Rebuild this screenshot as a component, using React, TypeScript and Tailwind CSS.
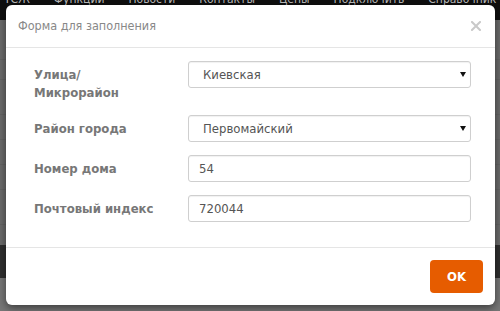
import { useState } from 'react';

const FONT = "font-['DejaVu_Sans_Condensed','DejaVu_Sans',Tahoma,sans-serif]";

const NAV = ['ТСЖ', 'Функции', 'Новости', 'Контакты', 'Цены', 'Подключить', 'Справочник'];

function Caret() {
  return (
    <svg
      viewBox="0 0 6 5"
      className="pointer-events-none absolute right-[5px] top-[11px] h-[5px] w-[6px]"
      aria-hidden
    >
      <path d="M0 0 H6 L3 5 Z" fill="#111" />
    </svg>
  );
}

function SelectField({ value, options }: { value: string; options: string[] }) {
  const [v, setV] = useState(value);
  return (
    <div className="relative w-[283px]">
      <select
        value={v}
        onChange={(e) => setV(e.target.value)}
        className="h-[27px] w-full appearance-none rounded-[3px] border border-[#cfcfcf] bg-white pl-[14px] text-[13px] text-[#555] shadow-[inset_0_1px_1px_rgba(0,0,0,0.06)] outline-none"
      >
        {options.map((o) => (
          <option key={o}>{o}</option>
        ))}
      </select>
      <Caret />
    </div>
  );
}

function TextField({ value }: { value: string }) {
  const [v, setV] = useState(value);
  return (
    <input
      value={v}
      onChange={(e) => setV(e.target.value)}
      className="h-[27px] w-[283px] rounded-[3px] border border-[#cfcfcf] bg-white px-[10px] text-[13px] text-[#555] shadow-[inset_0_1px_1px_rgba(0,0,0,0.06)] outline-none"
    />
  );
}

function Row({ label, children }: { label: React.ReactNode; children: React.ReactNode }) {
  return (
    <div className="flex items-start">
      <label className="w-[154px] pt-[5px] text-[13px] font-bold leading-[18px] text-[#777]">
        {label}
      </label>
      {children}
    </div>
  );
}

export default function App() {
  return (
    <div className={`relative h-[311px] w-[500px] overflow-hidden bg-[#6b6b6b] ${FONT}`}>
      {/* page behind the dialog */}
      <div className="flex h-[20px] items-start gap-[24px] overflow-hidden bg-[#0f0f0f] pl-[4px]">
        {NAV.map((n) => (
          <span key={n} className="-mt-[8px] shrink-0 text-[12px] leading-[14px] text-[#bdbdbd]">
            {n}
          </span>
        ))}
      </div>
      <div className="flex h-[225px] flex-col">
        <div className="h-[40px] border-b border-[#646464]" />
        <div className="h-[20px] border-b border-[#646464]" />
        <div className="h-[35px] border-b border-[#646464]" />
        <div className="h-[25px] border-b border-[#646464]" />
        <div className="h-[25px] border-b border-[#646464]" />
        <div className="h-[25px] border-b border-[#646464]" />
        <div className="h-[35px] border-b border-[#646464]" />
      </div>
      <div className="h-[33px] bg-[#2f2f2f]" />
      <div className="h-[33px] bg-[#777]" />

      {/* dialog */}
      <div className="absolute left-[6px] top-[5px] flex h-[300px] w-[489px] flex-col rounded-[6px] bg-white shadow-[0_3px_9px_rgba(0,0,0,0.5)]">
        <div className="flex h-[43px] items-center justify-between border-b border-[#e5e5e5] px-3">
          <h4 className="text-[12.5px] font-normal text-[#888]">Форма для заполнения</h4>
          <button type="button" aria-label="Закрыть" className="mr-[2px] p-0">
            <svg viewBox="0 0 10 10" className="h-[10px] w-[10px]" aria-hidden>
              <path d="M1 1 L9 9 M9 1 L1 9" stroke="#c9c9c9" strokeWidth="2" strokeLinecap="square" />
            </svg>
          </button>
        </div>

        <div className="flex flex-1 flex-col gap-[13px] pl-[28px] pt-[13px]">
          <Row
            label={
              <>
                Улица/
                <br />
                Микрорайон
              </>
            }
          >
            <SelectField value="Киевская" options={['Киевская', 'Московская', 'Токтогула']} />
          </Row>
          <Row label="Район города">
            <SelectField value="Первомайский" options={['Первомайский', 'Ленинский', 'Октябрьский', 'Свердловский']} />
          </Row>
          <Row label="Номер дома">
            <TextField value="54" />
          </Row>
          <Row label="Почтовый индекс">
            <TextField value="720044" />
          </Row>
        </div>

        <div className="flex h-[58px] justify-end border-t border-[#e5e5e5] pr-3 pt-[12px]">
          <button
            type="button"
            className="h-[33px] w-[53px] rounded-[4px] bg-[#e65c00] text-[13px] font-bold text-white"
          >
            OK
          </button>
        </div>
      </div>
    </div>
  );
}
